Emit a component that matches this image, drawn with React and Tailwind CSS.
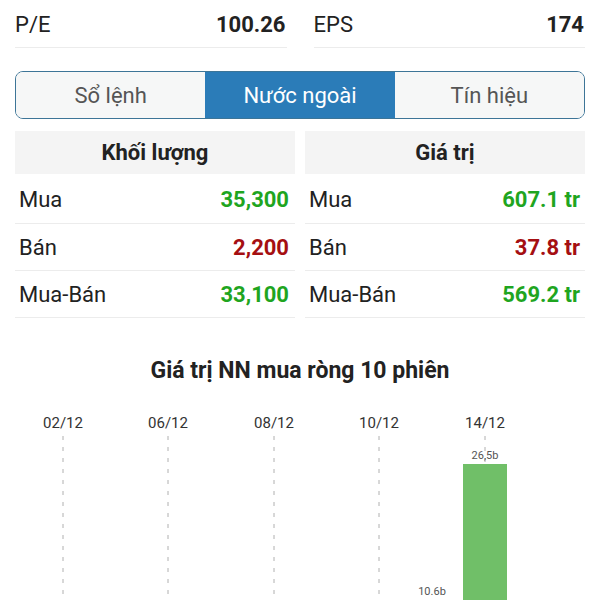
const stats = [
  { label: 'P/E', value: '100.26' },
  { label: 'EPS', value: '174' },
]

const tabs = ['Sổ lệnh', 'Nước ngoài', 'Tín hiệu']

const volumeRows = [
  { label: 'Mua', value: '35,300', color: 'text-[#1fa51f]' },
  { label: 'Bán', value: '2,200', color: 'text-[#a50f12]' },
  { label: 'Mua-Bán', value: '33,100', color: 'text-[#1fa51f]' },
]

const valueRows = [
  { label: 'Mua', value: '607.1 tr', color: 'text-[#1fa51f]' },
  { label: 'Bán', value: '37.8 tr', color: 'text-[#a50f12]' },
  { label: 'Mua-Bán', value: '569.2 tr', color: 'text-[#1fa51f]' },
]

const dates = [
  { x: 63, label: '02/12' },
  { x: 168, label: '06/12' },
  { x: 274, label: '08/12' },
  { x: 379, label: '10/12' },
  { x: 485, label: '14/12' },
]

const StatTable = ({ title, rows, padRight }) => (
  <div className="flex flex-col">
    <div className="h-[43px] bg-[#f4f4f4] flex items-center justify-center text-[22px] font-bold text-[#222]">
      {title}
    </div>
    {rows.map((r, i) => (
      <div
        key={r.label}
        className={`${i === 0 ? 'h-[50px] pt-[2px]' : 'h-[47px]'} flex items-center justify-between border-b border-[#ececec] pl-[4px] ${padRight}`}
      >
        <span className="text-[22px] text-[#222]">{r.label}</span>
        <span className={`text-[22px] font-bold ${r.color}`}>{r.value}</span>
      </div>
    ))}
  </div>
)

export default function App() {
  return (
    <div
      className="w-[600px] h-[600px] overflow-hidden bg-white"
      style={{ fontFamily: 'Roboto, "Noto Sans", sans-serif' }}
    >
      <div className="grid grid-cols-2 gap-[27px] px-[15px]">
        {stats.map((s) => (
          <div
            key={s.label}
            className="h-[48px] pt-[2px] flex items-center justify-between border-b border-[#ececec]"
          >
            <span className="text-[22px] text-[#222]">{s.label}</span>
            <span className="text-[22px] font-bold text-[#222] pr-[1px]">{s.value}</span>
          </div>
        ))}
      </div>

      <div className="mx-[15px] mt-[23px] h-[48px] grid grid-cols-3 border border-[#3d7597] rounded-[8px] overflow-hidden">
        {tabs.map((t, i) => (
          <div
            key={t}
            className={`flex items-center justify-center text-[22px] pt-[1px] ${
              i === 1 ? 'bg-[#2b7cb8] text-white' : 'bg-[#f6f7f7] text-[#555]'
            }`}
          >
            {t}
          </div>
        ))}
      </div>

      <div className="mx-[15px] mt-[12px] grid grid-cols-2 gap-[10px]">
        <StatTable title="Khối lượng" rows={volumeRows} padRight="pr-[6px]" />
        <StatTable title="Giá trị" rows={valueRows} padRight="pr-[5px]" />
      </div>

      <div className="mt-[40px] text-center text-[23px] font-bold text-[#222] leading-[26px]">
        Giá trị NN mua ròng 10 phiên
      </div>

      <svg width="600" height="198" className="mt-[16px] block overflow-visible">
        {dates.map((d) => (
          <g key={d.label}>
            <text x={d.x} y={28} textAnchor="middle" fontSize="15" fill="#333">
              {d.label}
            </text>
            <line
              x1={d.x}
              y1={36}
              x2={d.x}
              y2={198}
              stroke="#b0b0b0"
              strokeWidth="1"
              strokeDasharray="4 7"
            />
          </g>
        ))}
        <rect x={463} y={64} width={44} height={136} fill="#70bf68" />
        <text x={485} y={59} textAnchor="middle" fontSize="11" fill="#555">
          26,5b
        </text>
        <text x={432} y={195} textAnchor="middle" fontSize="11" fill="#555">
          10.6b
        </text>
      </svg>
    </div>
  )
}
